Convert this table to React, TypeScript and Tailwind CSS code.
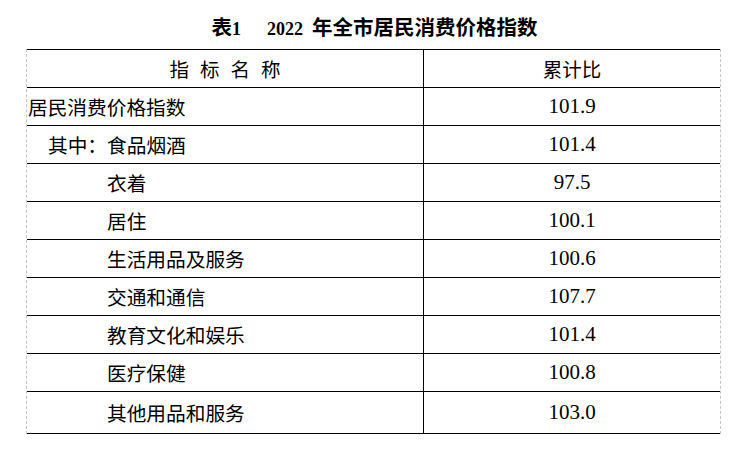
import React from "react";

const rows: { label: string; indent: number; value: string }[] = [
  { label: "居民消费价格指数", indent: 0, value: "101.9" },
  { label: "其中：食品烟酒", indent: 1, value: "101.4" },
  { label: "衣着", indent: 2, value: "97.5" },
  { label: "居住", indent: 2, value: "100.1" },
  { label: "生活用品及服务", indent: 2, value: "100.6" },
  { label: "交通和通信", indent: 2, value: "107.7" },
  { label: "教育文化和娱乐", indent: 2, value: "101.4" },
  { label: "医疗保健", indent: 2, value: "100.8" },
  { label: "其他用品和服务", indent: 2, value: "103.0" },
];

const cjk = "font-['Noto_Sans_CJK_SC',sans-serif]";
const num = "font-['Liberation_Serif','Noto_Sans_CJK_SC',serif]";

export default function App() {
  return (
    <div className="w-[749px] h-[461px] bg-white text-black">
      <div className="h-[49px] flex items-start justify-center pt-[12px]">
        <div className="flex items-baseline font-bold leading-[28px]">
          <span className={`${cjk} text-[20.5px]`}>表</span>
          <span className={`${num} text-[18px]`}>1</span>
          <span className={`${num} text-[18px] ml-[26px]`}>2022</span>
          <span className={`${cjk} text-[20.5px] ml-[9px]`}>年全市居民消费价格指数</span>
        </div>
      </div>
      <div className="ml-[26px] w-[695px] border-l border-r border-dashed border-[#c4c4c4]">
        <div className="flex h-[38px] border-t border-black">
          <div className="w-[396px] flex items-center justify-center gap-[11px] text-[19.5px] font-['Noto_Sans_CJK_SC',sans-serif] leading-none">
            <span>指</span>
            <span>标</span>
            <span>名</span>
            <span>称</span>
          </div>
          <div className="flex-1 border-l border-black flex items-center justify-center text-[19.5px] font-['Noto_Sans_CJK_SC',sans-serif] leading-none">
            累计比
          </div>
        </div>
        {rows.map((r, i) => {
          const last = i === rows.length - 1;
          return (
            <div
              key={i}
              className={
                last
                  ? "flex h-[43px] border-t border-b border-black"
                  : "flex h-[38px] border-t border-black"
              }
            >
              <div
                className={
                  (r.indent === 0
                    ? "pl-[1px]"
                    : r.indent === 1
                    ? "pl-[21px]"
                    : "pl-[80px]") +
                  " w-[396px] flex items-center text-[19.7px] font-['Noto_Sans_CJK_SC',sans-serif] leading-none whitespace-nowrap"
                }
              >
                {r.label}
              </div>
              <div className="flex-1 border-l border-black flex items-center justify-center text-[21px] font-['Liberation_Serif',serif] leading-none">
                {r.value}
              </div>
            </div>
          );
        })}
      </div>
    </div>
  );
}
